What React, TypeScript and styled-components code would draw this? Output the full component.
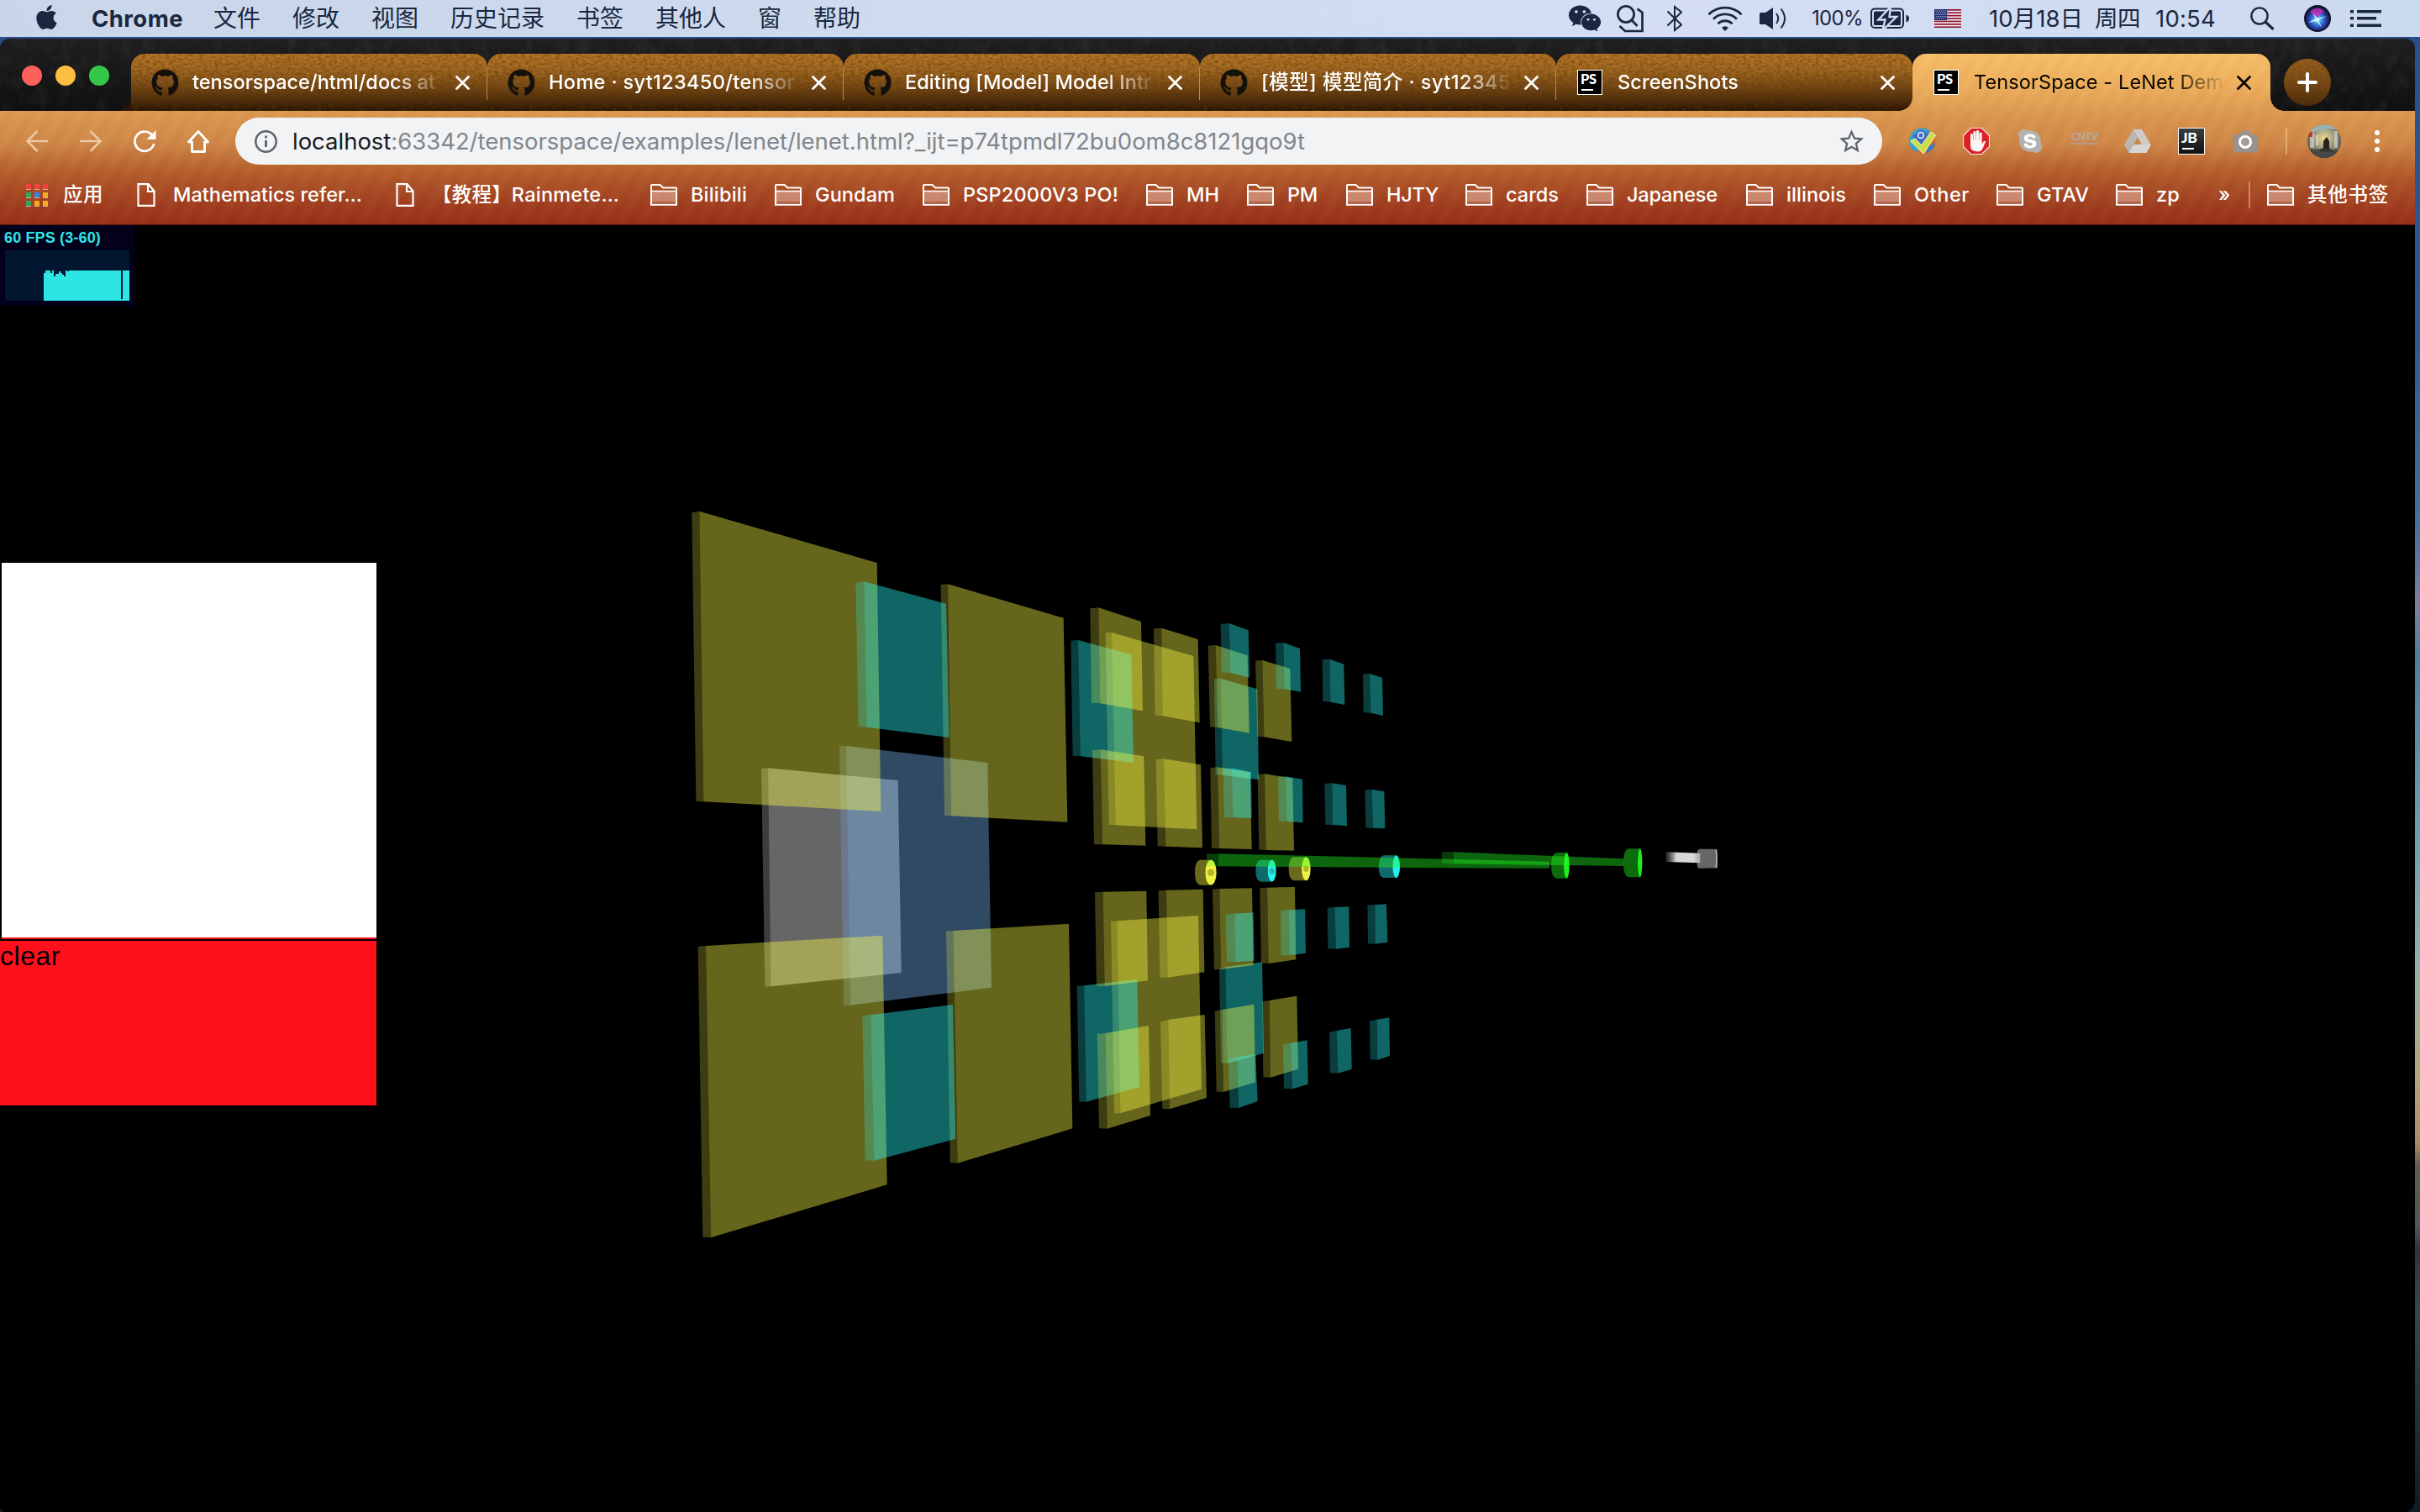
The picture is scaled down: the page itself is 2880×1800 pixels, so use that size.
import React, { useLayoutEffect, useRef, useState } from 'react';
import styled, { createGlobalStyle, css } from 'styled-components';
import { FaApple, FaGithub, FaSkype, FaWeixin } from 'react-icons/fa';

const sans = `Inter, "Noto Sans CJK SC", sans-serif`;

const GlobalStyle = createGlobalStyle`
  * { box-sizing: border-box; }
  html, body { margin: 0; padding: 0; background: #000; }
  body { width: 2880px; height: 1800px; overflow: hidden; font-family: ${sans}; }
  svg { display: block; flex: none; }
`;

/* ---------- text with a fixed measure ---------- */

const FitBox = styled.span<{ $w: number }>`
  display: block;
  flex: none;
  width: ${p => p.$w}px;
  white-space: pre;
  overflow: visible;
`;
const FitInner = styled.span`
  display: inline-block;
`;

function Fit({ w, text, children }: { w: number; text: string; children?: React.ReactNode }) {
  const ref = useRef<HTMLSpanElement>(null);
  const [spacing, setSpacing] = useState(0);
  useLayoutEffect(() => {
    if (ref.current) {
      const natural = ref.current.getBoundingClientRect().width;
      setSpacing((w - natural) / Array.from(text).length);
    }
  }, [w, text]);
  return (
    <FitBox $w={w}>
      <FitInner ref={ref} style={{ letterSpacing: spacing }}>{children ?? text}</FitInner>
    </FitBox>
  );
}

/* ---------- desktop and menu bar ---------- */

const Desktop = styled.div`
  width: 2880px;
  height: 1800px;
  display: flex;
  flex-direction: column;
  overflow: hidden;
  background: linear-gradient(180deg, #1f3f70 0, #2c5088 60px, #31588c 400px, #456f9e 620px, #7d7f9c 720px, #4f7e9c 780px, #6f9fae 1000px, #93b0a8 1150px, #b0a67c 1280px, #a98c64 1360px, #5d5a50 1390px, #55585a 1460px, #2f333c 1485px, #38474e 1560px, #101a22 1800px);
`;

const MenuBar = styled.header`
  height: 44px;
  flex: none;
  display: flex;
  align-items: center;
  padding: 0 46px 0 43px;
  background: linear-gradient(90deg, #c9d6ea 0, #cddaee 900px, #cfdcf2 1500px, #d4ddf3 2000px, #cfdcf1 2500px, #cbd9ee 2880px);
  color: #1a2740;
  font-size: 28px;
  line-height: 44px;
`;
const AppName = styled.div`
  margin-left: 40px;
  font-weight: 700;
  font-size: 27.5px;
`;
const Menus = styled.nav`
  display: flex;
  gap: 38px;
  margin-left: 36px;
`;
const StatusArea = styled.div`
  display: flex;
  align-items: center;
  margin-left: auto;
`;
const Status = styled.div<{ $ml: number; $size?: number }>`
  margin-left: ${p => p.$ml}px;
  font-size: ${p => p.$size ?? 27}px;
`;

const menus = ['文件', '修改', '视图', '历史记录', '书签', '其他人', '窗', '帮助'];
const ink = '#1a2740';

const ScanIcon = () => (
  <svg width="32" height="33" viewBox="0 0 32 33" fill="none" stroke={ink} strokeWidth="2.7">
    <circle cx="11" cy="11" r="9.6" />
    <path d="M17 17l7.5 8M24.500 4.500l6 4.500v22H10l-6.500-6" />
  </svg>
);
const BluetoothIcon = () => (
  <svg width="18" height="32" viewBox="0 0 18 32" fill="none" stroke={ink} strokeWidth="2" strokeLinejoin="miter">
    <path d="M0.500 7.500L17 23.500 9 30V2l8 6.500L0.500 24.500" />
  </svg>
);
const WifiIcon = () => (
  <svg width="42" height="30" viewBox="0 0 42 30" fill="none" stroke={ink} strokeWidth="2.8">
    <path d="M1.500 10.200a27.500 27.500 0 0 1 39 0M7 15.700a19.800 19.800 0 0 1 28 0M12.500 21.300a12 12 0 0 1 17 0" />
    <path d="M17 26a5.700 5.700 0 0 1 8 0l-4 4z" fill={ink} stroke="none" />
  </svg>
);
const VolumeIcon = () => (
  <svg width="33" height="26" viewBox="0 0 33 26" fill="none" stroke={ink} strokeWidth="2">
    <path d="M0 7.500q0-1.500 1.500-1.500H7l9-6v26l-9-6H1.500Q0 20 0 18.500z" fill={ink} stroke="none" />
    <path d="M20 7q4.500 6 0 12M25.500 1.500q9 11.500 0 23" />
  </svg>
);
const BatteryIcon = () => (
  <svg width="46" height="26" viewBox="0 0 46 26">
    <rect x="1" y="1.500" width="38" height="22.500" rx="4" fill="none" stroke={ink} strokeWidth="2" />
    <path d="M42.500 8.500q3.500 1 3.500 4.500t-3.500 4.500z" fill={ink} />
    <rect x="4" y="4.500" width="32" height="16.500" rx="1.500" fill={ink} />
    <path d="M24 -1L9.500 14.500h8L14.500 27 31 11h-8.500z" fill={ink} stroke="#d2dcf1" strokeWidth="2.4" />
  </svg>
);
const FlagIcon = () => (
  <svg width="32" height="22" viewBox="0 0 32 22">
    <rect width="32" height="22" fill="#f3eef2" />
    {[0, 1, 2, 3, 4, 5, 6].map(i => (
      <rect key={i} y={i * 3.4} width="32" height="1.700" fill="#8c1230" />
    ))}
    <rect width="15" height="13" fill="#1d2d6e" />
    {[0, 1, 2, 3, 4].map(r =>
      [0, 1, 2, 3, 4, 5].map(c => (
        <rect key={`${r}-${c}`} x={1.5 + c * 2.2 + (r % 2)} y={1.5 + r * 2.2} width="1" height="1" fill="#dfe3f2" />
      ))
    )}
  </svg>
);
const SearchIcon = () => (
  <svg width="29" height="28" viewBox="0 0 29 28" fill="none" stroke={ink} strokeWidth="2.4">
    <circle cx="11" cy="11" r="9.600" />
    <path d="M18 18l9.500 9" strokeWidth="3.200" />
  </svg>
);
const SiriIcon = () => (
  <svg width="32" height="32" viewBox="0 0 32 32">
    <defs>
      <radialGradient id="siri" cx=".5" cy=".55" r=".55">
        <stop offset="0" stopColor="#c8f2ff" />
        <stop offset=".25" stopColor="#43b4e8" />
        <stop offset=".6" stopColor="#2a4ac0" />
        <stop offset="1" stopColor="#10102e" />
      </radialGradient>
    </defs>
    <circle cx="16" cy="16" r="16" fill="#11132e" />
    <circle cx="16" cy="16" r="14" fill="url(#siri)" />
    <path d="M7 8q8-8 17-1l-8 8z" fill="#d72bb0" opacity=".75" />
    <path d="M16 16L27 13 17 18l4 9-6-8-10 2 9-5-4-7z" fill="#dffaff" opacity=".9" />
  </svg>
);
const ListIcon = () => (
  <svg width="37" height="20" viewBox="0 0 37 20" fill={ink}>
    <path d="M0 0h4v3.500H0zM8 0h29v3.500H8zM0 8h4v3.500H0zM8 8h23v3.500H8zM0 16.500h4V20H0zM8 16.500h29V20H8z" />
  </svg>
);

/* ---------- browser window ---------- */

const Window = styled.main`
  flex: 1;
  width: 2874px;
  margin-top: 2px;
  display: flex;
  flex-direction: column;
  border-radius: 12px 12px 14px 8px;
  overflow: hidden;
  background: #000;
`;

const TabStrip = styled.div`
  position: relative;
  isolation: isolate;
  height: 86px;
  flex: none;
  display: flex;
  align-items: flex-end;
  background: linear-gradient(180deg, #1f1f1f, #181818 40%, #101010);
`;
const Lights = styled.div`
  display: flex;
  gap: 16px;
  width: 156px;
  height: 84px;
  padding-left: 26px;
  align-items: center;
`;
const Light = styled.i<{ $c: string }>`
  width: 24px;
  height: 24px;
  border-radius: 50%;
  background: ${p => p.$c};
`;

const Tab = styled.div<{ $active?: boolean; $first?: boolean; $line?: boolean }>`
  position: relative;
  isolation: isolate;
  width: ${p => (p.$active ? 426 : 424)}px;
  height: 68px;
  flex: none;
  display: flex;
  align-items: center;
  padding-left: 23px;
  border-radius: 16px 16px 0 0;
  font-size: 23.500px;
  line-height: 34px;
  font-weight: ${p => (p.$active ? 400 : 500)};
  color: ${p => (p.$active ? '#0b0702' : '#fff')};
  background: ${p =>
    p.$active
      ? `repeating-linear-gradient(122deg, rgba(255,225,150,.04) 0 5px, rgba(150,70,20,.025) 9px 13px, rgba(255,225,150,.04) 18px), linear-gradient(180deg, #f6be67, #eeb05d 50%, #dc9b52)`
      : 'linear-gradient(180deg, #b57628 0, #a26822 28%, #744615 60%, #412409 88%, #281303 100%)'};
  ${p => p.$active && css`z-index: 2;`}
  ${p =>
    (p.$active || p.$first) &&
    css`
      &::before {
        content: '';
        position: absolute;
        left: -16px;
        bottom: 0;
        width: 16px;
        height: 16px;
        background: radial-gradient(circle at 0 0, transparent 15.500px, ${p.$active ? '#dd9c53' : '#2b1605'} 16px);
      }
    `}
  ${p =>
    (p.$active || p.$line) &&
    css`
      &::after {
        content: '';
        position: absolute;
        ${p.$active
          ? 'right: -16px; bottom: 0; width: 16px; height: 16px; background: radial-gradient(circle at 100% 0, transparent 15.500px, #dd9c53 16px);'
          : 'right: -1px; top: 15px; width: 2px; height: 40px; background: #b58a55; z-index: 3;'}
      }
    `}
`;
const TabTitle = styled.div`
  width: 298px;
  margin-left: 16px;
  mask-image: linear-gradient(90deg, #000 238px, rgba(0, 0, 0, 0.1) 294px, transparent 298px);
`;
const TabClose = styled.div`
  margin-left: 15px;
`;
const Grain = styled.svg<{ $r?: string }>`
  position: absolute;
  inset: 0;
  z-index: -1;
  width: 100%;
  height: 100%;
  border-radius: ${p => p.$r ?? '0'};
  pointer-events: none;
`;
const NewTab = styled.div`
  position: relative;
  isolation: isolate;
  width: 56px;
  height: 56px;
  margin: 0 0 6px 16px;
  border-radius: 50%;
  overflow: hidden;
  display: grid;
  place-items: center;
  background: linear-gradient(180deg, #96601f, #7a4a17 50%, #4b2b0b);
`;

const FavSlot = styled.div`
  width: 34px;
  flex: none;
  display: grid;
  place-items: center;
`;
const JetMark = styled.div<{ $grey?: boolean; $s: number }>`
  width: ${p => p.$s}px;
  height: ${p => p.$s}px;
  flex: none;
  border: 1px solid #fff;
  background: ${p => (p.$grey ? 'linear-gradient(#3c3c3c, #111)' : '#000')};
  color: #fff;
  font: 900 ${p => p.$s * 0.55}px/17px Lato, sans-serif;
  letter-spacing: -0.300px;
  padding: 2px 0 0 3px;
  &::after {
    content: '';
    display: block;
    width: 14px;
    height: 2px;
    margin: ${p => (p.$grey ? 4 : 3)}px 0 0 1px;
    background: #fff;
  }
`;

const CloseIcon = ({ color }: { color: string }) => (
  <svg width="17" height="17" viewBox="0 0 17 17" stroke={color} strokeWidth="2.800" strokeLinecap="round">
    <path d="M1.500 1.500l14 14M15.500 1.500l-14 14" />
  </svg>
);

const tabs = [
  { icon: 'gh', title: 'tensorspace/html/docs at', w: 289 },
  { icon: 'gh', title: 'Home · syt123450/tensor', w: 293 },
  { icon: 'gh', title: 'Editing [Model] Model Intr', w: 293 },
  { icon: 'gh', title: '[模型] 模型简介 · syt12345', w: 297 },
  { icon: 'ps', title: 'ScreenShots', w: 144 },
  { icon: 'ps', title: 'TensorSpace - LeNet Dem', w: 297, active: true },
];

const Chrome = styled.div`
  height: 136px;
  flex: none;
  display: flex;
  flex-direction: column;
  border-bottom: 1px solid #5c1c0c;
  background:
    repeating-linear-gradient(118deg, rgba(255,200,130,.035) 0 4px, rgba(120,30,0,.025) 9px 14px, rgba(255,200,130,.035) 21px),
    linear-gradient(180deg, #dd9a52 0, #cd8546 30%, #b8632f 50%, #aa4f26 66%, #a03e20 82%, #942f18 100%);
`;
const Toolbar = styled.div`
  height: 72px;
  flex: none;
  display: flex;
  align-items: center;
  padding-left: 30px;
`;
const NavIcons = styled.div`
  display: flex;
  width: 250px;
  gap: 36px;
`;
const Omnibox = styled.div`
  width: 1960px;
  height: 56px;
  border-radius: 28px;
  background: #f1f3f5;
  display: flex;
  align-items: center;
  padding: 0 22px 0 23px;
  font-size: 27.500px;
  line-height: 40px;
  color: #80868b;
  & > svg:last-child { margin-left: auto; }
`;
const Url = styled.div`
  margin-left: 18px;
  b { font-weight: 400; color: #17191c; }
`;
const Extensions = styled.div`
  display: flex;
  align-items: center;
  gap: 32px;
  margin-left: 32px;
`;
const Divider = styled.i<{ $h: number; $ml: number; $mr: number }>`
  width: 2px;
  height: ${p => p.$h}px;
  margin: 0 ${p => p.$mr}px 0 ${p => p.$ml}px;
  background: rgba(255, 215, 170, 0.45);
`;
const Dots = styled.div`
  margin-left: 40px;
  display: grid;
  gap: 4px;
  i { width: 6px; height: 6px; border-radius: 50%; background: #fff; }
`;
const Cntv = styled.div`
  width: 32px;
  height: 14px;
  padding-left: 1px;
  border-bottom: 2px solid #b39a8a;
  color: #b3a9a2;
  font: 700 11.500px/11px Inter, sans-serif;
  letter-spacing: -0.500px;
  margin-top: -6px;
`;

const Bookmarks = styled.div`
  height: 55px;
  display: flex;
  align-items: center;
  padding-left: 30px;
  color: #fff;
  font-size: 23.500px;
  font-weight: 500;
  line-height: 34px;
`;
const Bookmark = styled.div<{ $w: number; $gap?: number }>`
  width: ${p => p.$w}px;
  flex: none;
  display: flex;
  align-items: center;
  gap: ${p => p.$gap ?? 16}px;
`;

const BackIcon = ({ flip }: { flip?: boolean }) => (
  <svg width="28" height="28" viewBox="0 0 28 28" fill="none" stroke="#ecc8a4" strokeWidth="2.600" transform={flip ? 'scale(-1 1)' : undefined}>
    <path d="M27 14H3M14.500 2L2.500 14l12 12" />
  </svg>
);
const ReloadIcon = () => (
  <svg width="28" height="28" viewBox="0 0 28 28" fill="none" stroke="#fff" strokeWidth="2.800">
    <path d="M23.500 7.500A11.600 11.600 0 1 0 25.300 17" />
    <path d="M27.500 1v11h-11z" fill="#fff" stroke="none" />
  </svg>
);
const HomeIcon = () => (
  <svg width="28" height="28" viewBox="0 0 28 28" fill="none" stroke="#fff" strokeWidth="2.800" strokeLinejoin="round">
    <path d="M14 2.500L2.500 15h4v11.500h15V15h4z" />
  </svg>
);
const InfoIcon = () => (
  <svg width="27" height="27" viewBox="0 0 27 27" fill="none" stroke="#5f6368" strokeWidth="2.500">
    <circle cx="13.500" cy="13.500" r="12.200" />
    <path d="M13.500 12v8M13.500 6.500v3" strokeWidth="2.800" />
  </svg>
);
const StarIcon = () => (
  <svg width="29" height="28" viewBox="0 0 29 28" fill="none" stroke="#5f6368" strokeWidth="2.300">
    <path d="M14.500 3l3.400 7.700 8.300.8-6.300 5.500 1.900 8.200-7.300-4.400-7.300 4.400 1.900-8.200-6.300-5.500 8.300-.8z" />
  </svg>
);
const PageIcon = () => (
  <svg width="32" height="28" viewBox="0 0 32 28" fill="none" stroke="#fff" strokeWidth="2.200">
    <path d="M6.500 1.200h12l7 8.300v17.300h-19zM18 1.500v8.500h7.500" />
  </svg>
);
const FolderIcon = () => (
  <svg width="32" height="26" viewBox="0 0 32 26">
    <path d="M1 24.800V2q0-1 1-1h9.500l3.500 3.500H30q1 0 1 1v19.300z" fill="none" stroke="#fff" strokeWidth="2" />
    <path d="M2 9.500h28V24H2z" fill="#f0c8b8" fillOpacity=".5" />
    <path d="M2 21h28v3H2z" fill="#90391f" fillOpacity=".45" />
    <path d="M1 8.600h30" stroke="#fff" strokeWidth="1.800" />
  </svg>
);
const AppsIcon = () => {
  const colors = ['#f0403a', '#f0403a', '#f0403a', '#3aa158', '#2f86f0', '#f5ab22', '#3aa158', '#f5ab22', '#f5ab22'];
  return (
    <svg width="28" height="28" viewBox="0 0 28 28">
      {colors.map((c, i) => (
        <g key={i} transform={`translate(${1 + (i % 3) * 10} ${Math.floor(i / 3) * 10 + 1})`}>
          <rect width="6" height="6" fill={c} />
          <rect y="6" width="6" height="1" fill="#f3e0d4" opacity=".7" />
        </g>
      ))}
    </svg>
  );
};

const SwirlIcon = () => (
  <svg width="32" height="32" viewBox="0 0 32 32">
    <circle cx="16" cy="16" r="15.500" fill="#e06a2c" />
    <path d="M16 .5A15.500 15.500 0 0 0 4 26l5 3 16-25Q21 .5 16 .5z" fill="#2fa3d0" />
    <path d="M14 2l10 6-9 12L4 10z" fill="#3d6cc0" />
    <circle cx="14" cy="9" r="3.400" fill="none" stroke="#e3f0fb" strokeWidth="1.600" />
    <path d="M1.500 16l6-3 7 8L26 5l5.500 4L17 31z" fill="#c9de4a" stroke="#f3f7c0" strokeWidth="1" />
    <path d="M20 30.500q9-3 11.500-13l-8 5z" fill="#2c7ec6" />
  </svg>
);
const StopIcon = () => (
  <svg width="32" height="32" viewBox="0 0 32 32">
    <path d="M9.500.5h13l9 9v13l-9 9h-13l-9-9v-13z" fill="#dd1f2a" stroke="#f6e5e0" strokeWidth="1.200" />
    <path d="M9 17V8.500a1.500 1.500 0 0 1 3 0V15h.4V5.500a1.600 1.600 0 0 1 3.200 0V14h.4V4.500a1.600 1.600 0 0 1 3.200 0V15h.4V7a1.500 1.500 0 0 1 3 0v12l2-2.500q2-1.500 2.600 0L23 26q-2 2.500-5 2.500-9 0-9-7z" fill="#fbf4f2" />
  </svg>
);
const DriveIcon = () => (
  <svg width="32" height="28" viewBox="0 0 32 28">
    <path d="M10.500 0h10.500l10.500 18H21z" fill="#cfcbc8" />
    <path d="M10.500 0L16 9.500 5.500 28 0 18.500z" fill="#b9b5b2" />
    <path d="M11 18h21l-5.500 10H5.500z" fill="#d8d5d2" />
  </svg>
);
const SkypeIcon = () => (
  <svg width="32" height="32" viewBox="0 0 32 32">
    <circle cx="16" cy="16" r="10" fill="#fff" />
    <foreignObject width="32" height="32">
      <FaSkype size={32} color="#b4b2b0" />
    </foreignObject>
  </svg>
);
const CameraIcon = () => (
  <svg width="32" height="27" viewBox="-1 0 32 27">
    <path d="M3 5h6l1.500-4.500h9L21 5h6q2.500 0 2.500 2.500v16.500q0 2.500-2.500 2.500H3q-2.500 0-2.500-2.500V7.500Q.5 5 3 5z" fill="#98928e" />
    <circle cx="15" cy="14" r="6.500" fill="#a39c97" stroke="#fff" strokeWidth="3" />
  </svg>
);
const Avatar = () => (
  <svg width="40" height="40" viewBox="0 0 40 40">
    <defs>
      <clipPath id="face"><circle cx="20" cy="20" r="20" /></clipPath>
      <radialGradient id="glow" cx=".5" cy=".42" r=".55">
        <stop offset="0" stopColor="#f1d98c" />
        <stop offset=".45" stopColor="#aaa988" />
        <stop offset="1" stopColor="#4c5557" />
      </radialGradient>
    </defs>
    <g clipPath="url(#face)">
      <rect width="40" height="40" fill="url(#glow)" />
      <path d="M0 0h40v8Q28 4 20 6T0 11z" fill="#9db0b0" />
      <path d="M3 10h5v18H3zM32 8h4v20h-4zM10 13h3v12h-3z" fill="#ddd6c4" opacity=".7" />
      <path d="M0 9h6v6H0z" fill="#b03a30" />
      <path d="M19 20l4-5 3 5v8l5 5H17l-4-2 6-3z" fill="#2a211c" />
      <path d="M0 31q20-4 40 1v9H0z" fill="#3f403c" opacity=".8" />
    </g>
  </svg>
);

const bookmarks: { name: string; slot: number; w: number; page?: boolean }[] = [
  { name: 'Mathematics refer…', slot: 308, w: 225, page: true },
  { name: '【教程】Rainmete…', slot: 308, w: 223, page: true },
  { name: 'Bilibili', slot: 148, w: 67 },
  { name: 'Gundam', slot: 176, w: 95 },
  { name: 'PSP2000V3 PO!', slot: 266, w: 185 },
  { name: 'MH', slot: 120, w: 39 },
  { name: 'PM', slot: 118, w: 36 },
  { name: 'HJTY', slot: 142, w: 62 },
  { name: 'cards', slot: 144, w: 63 },
  { name: 'Japanese', slot: 190, w: 108 },
  { name: 'illinois', slot: 152, w: 71 },
  { name: 'Other', slot: 146, w: 66 },
  { name: 'GTAV', slot: 142, w: 62 },
  { name: 'zp', slot: 122, w: 28 },
];

/* ---------- page content ---------- */

const Page = styled.section`
  position: relative;
  flex: 1;
  background: #000;
  overflow: hidden;
`;
const Stats = styled.div`
  position: absolute;
  left: 0;
  top: 0;
  width: 160px;
  height: 96px;
  padding: 5px 0 0 5px;
  background: #02001b;
  color: #2ce6e6;
  font: 700 18px/20px "Liberation Sans", sans-serif;
  svg { margin: 5px 0 0 1px; }
`;
const Sketch = styled.div`
  position: absolute;
  left: 0;
  top: 402px;
  width: 448px;
`;
const Pad = styled.div`
  height: 448px;
  margin-left: 2px;
  background: #fff;
  border-bottom: 2px solid #fd0f1b;
`;
const Clear = styled.div`
  height: 196px;
  margin-top: 2px;
  background: #fd0f1b;
  color: #000;
  font: 400 32px/37px "Liberation Sans", sans-serif;
`;

/* Each feature map is a thin box: outer edge, fold, far edge on top, then back along the bottom. */
type Pts = number[];
const near: Pts = [800, 580];
const nearLow: Pts = [800, 1000];
const far: Pts = [1260, 700];
const farLow: Pts = [1260, 1010];
const GREY = '#ffffff';
const BLUE = '#78b9fa';
const YELLOW = '#fdfd46';
const TEAL = '#28fdfd';
const GREEN = '#20fd20';

const layers: [string, Pts, Pts][] = [
  [GREY, near, [318, 1005, 342, 1003, 806, 1047, 818, 1734, 352, 1783, 331, 1784]],
  [BLUE, near, [597, 926, 621, 924, 1126, 984, 1140, 1787, 636, 1850, 612, 1850]],
  [YELLOW, near, [70, 90, 97, 86, 731, 270, 745, 1158, 112, 1123, 85, 1122]],
  [YELLOW, near, [959, 348, 984, 346, 1397, 467, 1411, 1196, 996, 1174, 972, 1172]],
  [YELLOW, far, [167, 160, 189, 159, 481, 243, 493, 862, 203, 847, 179, 846]],
  [YELLOW, nearLow, [92, 380, 120, 378, 751, 341, 767, 1231, 138, 1420, 109, 1418]],
  [YELLOW, nearLow, [978, 325, 1003, 324, 1416, 299, 1429, 1030, 1019, 1154, 992, 1152]],
  [YELLOW, farLow, [186, 260, 208, 259, 498, 240, 510, 860, 220, 946, 198, 946]],
  [TEAL, near, [655, 342, 685, 337, 978, 416, 989, 894, 694, 857, 665, 856]],
  [TEAL, far, [43, 188, 69, 186, 259, 238, 267, 624, 77, 601, 50, 599]],
  [TEAL, far, [555, 325, 578, 323, 709, 361, 714, 685, 584, 668, 560, 666]],
  [TEAL, nearLow, [679, 627, 709, 625, 1002, 588, 1012, 1067, 721, 1145, 689, 1144]],
  [TEAL, farLow, [65, 492, 90, 490, 280, 468, 288, 852, 98, 905, 73, 905]],
  [TEAL, farLow, [573, 430, 595, 423, 726, 406, 732, 731, 602, 768, 579, 766]],
  [YELLOW, far, [112, 73, 142, 70, 294, 120, 300, 439, 148, 412, 117, 410]],
  [YELLOW, far, [339, 145, 367, 143, 497, 183, 503, 481, 371, 457, 344, 455]],
  [YELLOW, far, [533, 206, 560, 204, 674, 241, 680, 518, 568, 498, 540, 496]],
  [YELLOW, far, [702, 260, 727, 258, 826, 288, 832, 549, 733, 532, 709, 531]],
  [YELLOW, far, [120, 579, 149, 577, 304, 601, 310, 920, 156, 916, 126, 916]],
  [YELLOW, far, [347, 612, 375, 610, 507, 631, 513, 928, 382, 923, 353, 922]],
  [YELLOW, far, [541, 642, 567, 640, 683, 658, 689, 933, 573, 930, 546, 929]],
  [YELLOW, far, [710, 666, 735, 664, 835, 679, 840, 938, 740, 936, 715, 935]],
  [YELLOW, farLow, [129, 157, 158, 155, 313, 152, 318, 472, 164, 492, 135, 491]],
  [YELLOW, farLow, [356, 151, 384, 149, 515, 146, 520, 442, 389, 461, 361, 461]],
  [YELLOW, farLow, [549, 146, 574, 144, 690, 142, 695, 417, 579, 432, 555, 433]],
  [YELLOW, farLow, [718, 142, 744, 140, 843, 138, 847, 397, 749, 411, 723, 410]],
  [YELLOW, farLow, [137, 662, 167, 660, 321, 633, 327, 954, 173, 1001, 144, 1000]],
  [YELLOW, farLow, [363, 620, 391, 612, 521, 594, 528, 891, 396, 931, 370, 930]],
  [YELLOW, farLow, [557, 581, 583, 576, 697, 557, 702, 835, 588, 870, 563, 869]],
  [YELLOW, farLow, [727, 547, 752, 543, 850, 527, 855, 788, 756, 818, 730, 817]],
  [TEAL, far, [578, 128, 608, 126, 677, 151, 681, 320, 613, 303, 581, 301]],
  [TEAL, far, [774, 197, 802, 195, 861, 216, 864, 371, 806, 361, 777, 359]],
  [TEAL, far, [941, 256, 967, 254, 1018, 272, 1021, 417, 970, 407, 943, 405]],
  [TEAL, far, [1086, 308, 1110, 306, 1155, 321, 1158, 456, 1114, 446, 1088, 444]],
  [TEAL, far, [587, 645, 617, 643, 687, 657, 689, 822, 623, 820, 591, 818]],
  [TEAL, far, [783, 675, 811, 673, 870, 683, 872, 838, 814, 834, 786, 833]],
  [TEAL, far, [949, 699, 976, 697, 1026, 705, 1029, 850, 978, 846, 952, 845]],
  [TEAL, far, [1093, 721, 1118, 719, 1162, 727, 1165, 859, 1122, 857, 1096, 856]],
  [TEAL, farLow, [596, 236, 629, 233, 695, 229, 698, 401, 631, 406, 600, 405]],
  [TEAL, farLow, [792, 222, 821, 220, 879, 217, 882, 374, 824, 382, 794, 381]],
  [TEAL, farLow, [959, 212, 985, 210, 1036, 208, 1038, 353, 990, 359, 961, 358]],
  [TEAL, farLow, [1102, 203, 1129, 201, 1170, 199, 1174, 335, 1130, 341, 1104, 340]],
  [TEAL, farLow, [606, 752, 638, 745, 703, 735, 710, 903, 642, 927, 611, 926]],
  [TEAL, farLow, [801, 700, 829, 695, 887, 685, 890, 842, 834, 859, 804, 858]],
  [TEAL, farLow, [966, 656, 992, 651, 1043, 642, 1046, 788, 997, 803, 969, 802]],
  [TEAL, farLow, [1110, 616, 1136, 611, 1180, 604, 1182, 741, 1138, 755, 1112, 754]],
];

function FeatureMap({ color, origin, pts }: { color: string; origin: Pts; pts: Pts }) {
  const at = (i: number) => `${(origin[0] + pts[i * 2] / 3).toFixed(2)},${(origin[1] + pts[i * 2 + 1] / 3).toFixed(2)}`;
  return (
    <g fill={color}>
      <polygon points={[0, 1, 4, 5].map(at).join(' ')} opacity=".24" />
      <polygon points={[1, 2, 3, 4].map(at).join(' ')} opacity=".4" />
    </g>
  );
}

function Ring({ color, x, cx, cy, rx, ry, hole }: { color: string; x: number; cx: number; cy: number; rx: number; ry: number; hole?: boolean }) {
  const r = Math.min(18, ry / 2);
  return (
    <g fill={color}>
      <path d={`M${cx} ${cy - ry}H${x + r}Q${x} ${cy - ry + 4} ${x} ${cy}T${x + r} ${cy + ry}H${cx}A${rx} ${ry} 0 0 1 ${cx} ${cy - ry}z`} opacity=".42" />
      <ellipse cx={cx} cy={cy} rx={rx} ry={ry} opacity=".95" />
      {hole && <ellipse cx={cx} cy={cy} rx={rx * 0.6} ry={ry * 0.27} fill="#3a3a00" opacity=".32" />}
    </g>
  );
}

const Scene = () => (
  <svg width="2874" height="1532" viewBox="0 268 2874 1532">
    {layers.map(([color, origin, pts], i) => (
      <FeatureMap key={i} color={color} origin={origin} pts={pts} />
    ))}
    <g transform="translate(1260 700) scale(.33333)">
      <Ring color={YELLOW} x={486} cx={543} cy={1016} rx={20} ry={45} hole />
      <Ring color={TEAL} x={703} cx={761} cy={1010} rx={15} ry={39} hole />
      <Ring color={YELLOW} x={821} cx={883} cy={1003} rx={16} ry={42} hole />
      <Ring color={TEAL} x={1142} cx={1205} cy={995} rx={13} ry={40} />
      <polygon points="528,949 570,950 570,994 528,993" fill={GREEN} opacity=".24" />
      <polygon points="570,949 1260,965 1752,977 1752,1001 1260,999 570,994" fill={GREEN} opacity=".4" />
    </g>
    <g transform="translate(1680 960) scale(.33333)">
      <Ring color={GREEN} x={498} cx={553} cy={211} rx={10} ry={46} />
      <Ring color={GREEN} x={756} cx={815} cy={202} rx={8} ry={51} />
      <polygon points="108,162 150,163 150,205 108,203" fill={GREEN} opacity=".24" />
      <polygon points="150,163 757,187 757,213 150,205" fill={GREEN} opacity=".4" />
      <linearGradient id="fade" x1="0" x2="1">
        <stop offset="0" stopColor="#777" stopOpacity=".3" />
        <stop offset=".3" stopColor="#d6d6d6" />
        <stop offset=".8" stopColor="#dadada" />
        <stop offset="1" stopColor="#a8a8a8" />
      </linearGradient>
      <polygon points="1020,157 1028,152 1090,153 1092,220 1024,221 1019,212" fill="#666" />
      <polygon points="908,163 1030,167 1030,202 908,198" fill="url(#fade)" />
      <path d="M1086 155q7 32 0 64" stroke="#b4b4b4" strokeWidth="5" fill="none" />
    </g>
  </svg>
);

const fpsTops = [27, 24, 24, 24, 27, 24, 31, 28, 28, 25, 27, 29, 31, 24, 25, 24, 24];
const FpsGraph = () => (
  <svg width="148" height="60" viewBox="0 0 148 60" shapeRendering="crispEdges">
    <rect width="148" height="60" fill="#021630" />
    <rect x="80" y="24" width="68" height="36" fill="#2ce6e6" />
    {fpsTops.map((t, i) => (
      <rect key={i} x={46 + i * 2} y={t} width="2" height={60 - t} fill="#2ce6e6" />
    ))}
    <rect x="138" y="24" width="2" height="34" fill="#021630" />
  </svg>
);

export default function App() {
  return (
    <Desktop>
      <GlobalStyle />
      <svg width="0" height="0" style={{ position: 'absolute' }}>
        <filter id="grain" x="0" y="0" width="100%" height="100%">
          <feTurbulence type="fractalNoise" baseFrequency=".22 .35" numOctaves="2" seed="4" />
          <feColorMatrix values="0 0 0 0 .1  0 0 0 0 .04  0 0 0 0 0  1.700 0 0 0 -.65" />
        </filter>
        <filter id="leather" x="0" y="0" width="100%" height="100%">
          <feTurbulence type="fractalNoise" baseFrequency=".07 .05" numOctaves="3" seed="9" />
          <feColorMatrix values="0 0 0 0 .5  0 0 0 0 .5  0 0 0 0 .5  1.200 0 0 0 -.5" />
        </filter>
      </svg>

      <MenuBar>
        <FaApple size={33} style={{ margin: '-4px -3px 0 -4px' }} />
        <AppName><Fit w={109} text="Chrome" /></AppName>
        <Menus>{menus.map(m => <span key={m}>{m}</span>)}</Menus>
        <StatusArea>
          <Status $ml={0}><FaWeixin size={40} /></Status>
          <Status $ml={18}><ScanIcon /></Status>
          <Status $ml={28}><BluetoothIcon /></Status>
          <Status $ml={30}><WifiIcon /></Status>
          <Status $ml={20}><VolumeIcon /></Status>
          <Status $ml={29} $size={24}><Fit w={61} text="100%" /></Status>
          <Status $ml={9}><BatteryIcon /></Status>
          <Status $ml={30}><FlagIcon /></Status>
          <Status $ml={33} $size={27.5}><Fit w={112} text="10月18日" /></Status>
          <Status $ml={14} $size={27.5}><Fit w={54} text="周四" /></Status>
          <Status $ml={18} $size={27.5}><Fit w={72} text="10:54" /></Status>
          <Status $ml={41}><SearchIcon /></Status>
          <Status $ml={35}><SiriIcon /></Status>
          <Status $ml={23}><ListIcon /></Status>
        </StatusArea>
      </MenuBar>

      <Window>
        <TabStrip>
          <Grain><rect width="100%" height="100%" filter="url(#leather)" opacity=".13" /></Grain>
          <Lights>
            <Light $c="#fc615c" />
            <Light $c="#fdbd40" />
            <Light $c="#34c84a" />
          </Lights>
          {tabs.map((t, i) => (
            <Tab key={t.title} $active={t.active} $first={i === 0} $line={i < 4}>
              {!t.active && (
                <Grain $r="16px 16px 0 0"><rect width="100%" height="100%" filter="url(#grain)" opacity=".7" /></Grain>
              )}
              <FavSlot>
                {t.icon === 'gh' ? <FaGithub size={33} color="#14100c" /> : <JetMark $s={30}>PS</JetMark>}
              </FavSlot>
              <TabTitle><Fit w={t.w} text={t.title} /></TabTitle>
              <TabClose><CloseIcon color={t.active ? '#0b0702' : '#fff'} /></TabClose>
            </Tab>
          ))}
          <NewTab>
            <Grain><rect width="100%" height="100%" filter="url(#grain)" opacity=".5" /></Grain>
            <svg width="24" height="24" viewBox="0 0 24 24" stroke="#fff" strokeWidth="4" strokeLinecap="round">
              <path d="M12 2v20M2 12h20" />
            </svg>
          </NewTab>
        </TabStrip>

        <Chrome>
          <Toolbar>
            <NavIcons>
              <BackIcon />
              <BackIcon flip />
              <ReloadIcon />
              <HomeIcon />
            </NavIcons>
            <Omnibox>
              <InfoIcon />
              <Url>
                <Fit w={1205} text="localhost:63342/tensorspace/examples/lenet/lenet.html?_ijt=p74tpmdl72bu0om8c8121gqo9t">
                  <b>localhost</b>:63342/tensorspace/examples/lenet/lenet.html?_ijt=p74tpmdl72bu0om8c8121gqo9t
                </Fit>
              </Url>
              <StarIcon />
            </Omnibox>
            <Extensions>
              <SwirlIcon />
              <StopIcon />
              <SkypeIcon />
              <Cntv>CNTV</Cntv>
              <DriveIcon />
              <JetMark $s={32} $grey>JB</JetMark>
              <CameraIcon />
            </Extensions>
            <Divider $h={32} $ml={32} $mr={24} />
            <Avatar />
            <Dots><i /><i /><i /></Dots>
          </Toolbar>
          <Bookmarks>
            <Bookmark $w={128} $gap={17}><AppsIcon /><Fit w={48} text="应用" /></Bookmark>
            {bookmarks.map(b => (
              <Bookmark key={b.name} $w={b.slot}>
                {b.page ? <PageIcon /> : <FolderIcon />}
                <Fit w={b.w} text={b.name} />
              </Bookmark>
            ))}
            <Fit w={14} text="»" />
            <Divider $h={32} $ml={22} $mr={20} />
            <Bookmark $w={160}><FolderIcon /><Fit w={97} text="其他书签" /></Bookmark>
          </Bookmarks>
        </Chrome>

        <Page>
          <Scene />
          <Stats>
            <Fit w={115} text="60 FPS (3-60)" />
            <FpsGraph />
          </Stats>
          <Sketch>
            <Pad />
            <Clear><Fit w={72} text="clear" /></Clear>
          </Sketch>
        </Page>
      </Window>
    </Desktop>
  );
}
